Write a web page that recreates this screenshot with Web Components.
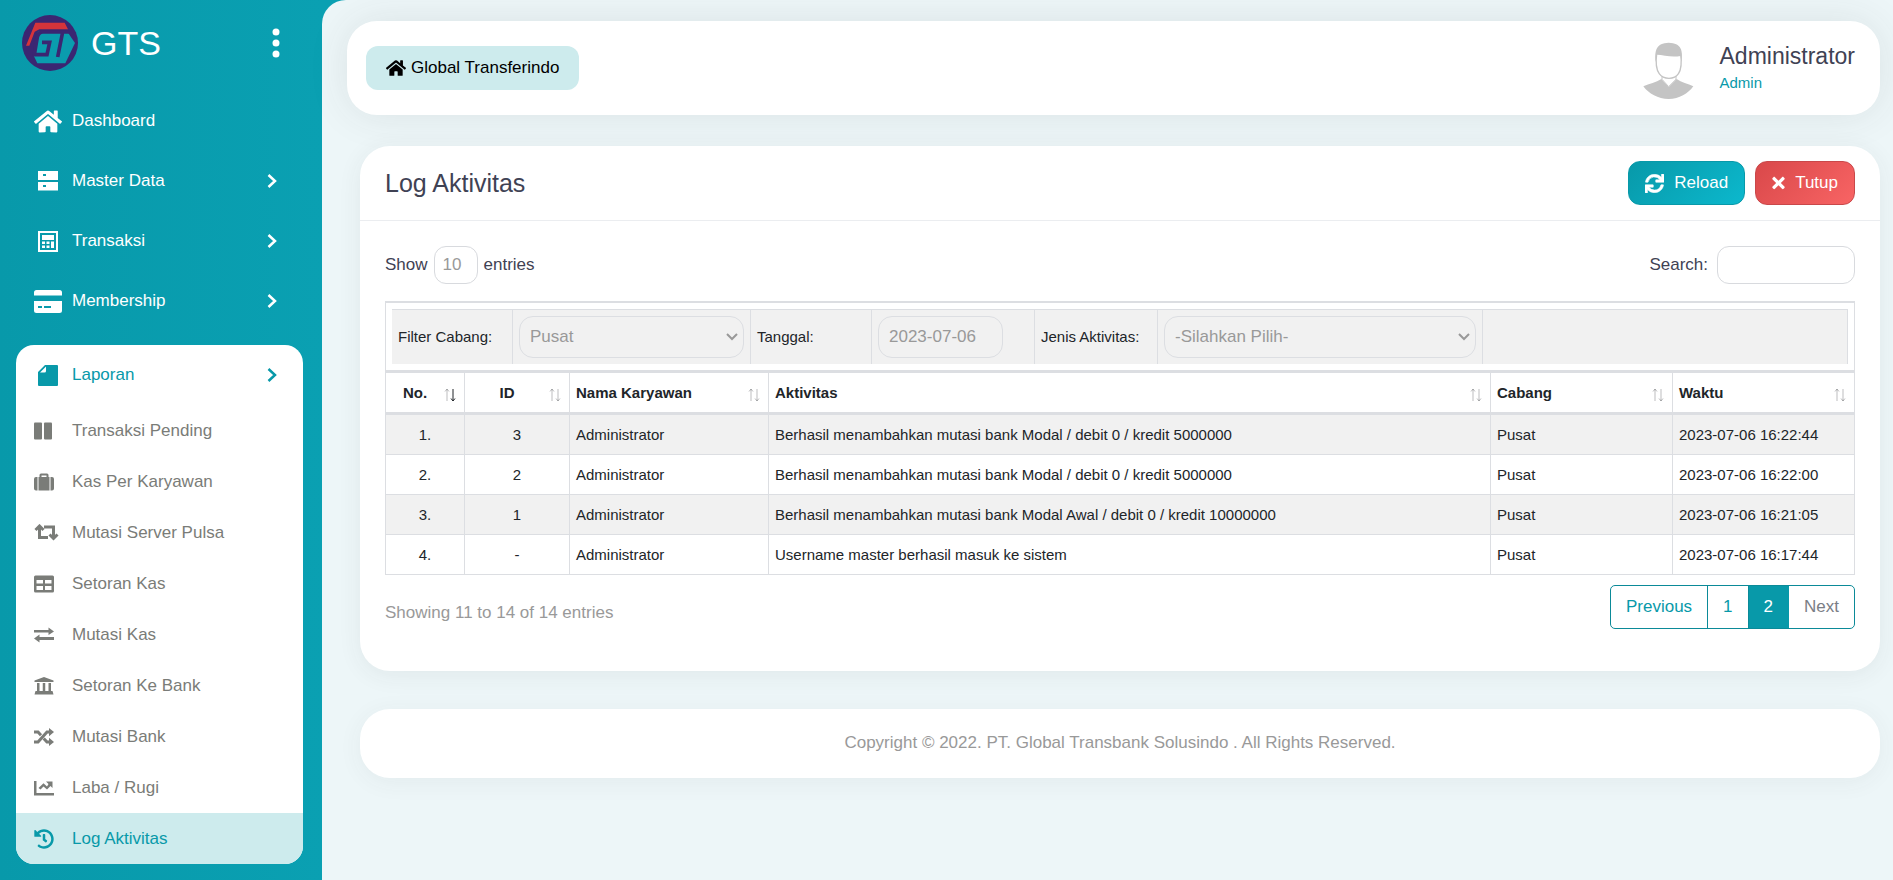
<!DOCTYPE html>
<html lang="id">
<head>
<meta charset="utf-8">
<title>GTS - Log Aktivitas</title>
<style>
  body { margin: 0; font-family: "Liberation Sans", Arial, sans-serif; font-size: 17px; line-height: 24px; color: #3f4254; background: #edf6f8; }
</style>
</head>
<body>
<gts-app>
  <gts-sidebar slot="sidebar"></gts-sidebar>
  <gts-topbar company="Global Transferindo" user="Administrator" role-name="Admin"></gts-topbar>
  <gts-card>
    <span slot="title">Log Aktivitas</span>
    <gts-button slot="actions" icon="sync" tone="primary">Reload</gts-button>
    <gts-button slot="actions" icon="times" tone="danger">Tutup</gts-button>
    <gts-table-tools></gts-table-tools>
    <gts-filter-bar></gts-filter-bar>
    <gts-log-table></gts-log-table>
    <gts-pagination>Showing 11 to 14 of 14 entries</gts-pagination>
  </gts-card>
  <gts-footer>Copyright © 2022. PT. Global Transbank Solusindo . All Rights Reserved.</gts-footer>
</gts-app>

<script>
const HOME = '<path d="M280.37 148.26L96 300.11V464a16 16 0 0 0 16 16l112.06-.29a16 16 0 0 0 15.92-16V368a16 16 0 0 1 16-16h64a16 16 0 0 1 16 16v95.64a16 16 0 0 0 16 16.05L464 480a16 16 0 0 0 16-16V300L295.67 148.26a12.19 12.19 0 0 0-15.3 0zM571.6 251.47L488 182.56V44.05a12 12 0 0 0-12-12h-56a12 12 0 0 0-12 12v72.61L318.47 43a48 48 0 0 0-61 0L4.34 251.47a12 12 0 0 0-1.6 16.9l25.5 31A12 12 0 0 0 45.15 301l235.22-193.74a12.19 12.19 0 0 1 15.3 0L530.9 301a12 12 0 0 0 16.9-1.6l25.5-31a12 12 0 0 0-1.7-16.93z"/>';
/* name: [width, height, viewBox, shapes] */
const ICONS = {
  home: [28, 25, '0 0 576 512', HOME],
  homeSmall: [20, 18, '0 0 576 512', HOME],
  server: [20, 20, '0 0 20 20', '<path fill-rule="evenodd" d="M0 0h20v9H0zM5 3v2h3V3zM0 11h20v8.500H0zM5 14v2h3v-2z"/>'],
  calculator: [20, 21, '0 0 20 21', '<path fill-rule="evenodd" d="M0 0h20v21H0zM2 2v17h16V2z"/><path d="M4 4h12v5H4zM4 10.500h3v2.500H4zM8.500 10.500h3v2.500h-3zM4 14.500h3V17H4zM8.500 14.500h3V17h-3zM13 10.500h3V17h-3z"/>'],
  card: [28, 23, '0 0 28 23', '<path fill-rule="evenodd" d="M2.500 0h23A2.500 2.500 0 0 1 28 2.500V5.500H0V2.500A2.500 2.500 0 0 1 2.500 0zM0 11h28v9.500a2.500 2.500 0 0 1-2.500 2.500h-23A2.500 2.500 0 0 1 0 20.500zM4 16v2h4v-2zM10 16v2h7v-2z"/>'],
  file: [20, 21, '0 0 20 21', '<path fill-rule="evenodd" d="M7 0h12a1 1 0 0 1 1 1v19a1 1 0 0 1-1 1H1a1 1 0 0 1-1-1V7zM8 1.500L2 7.500h4.500A1.500 1.500 0 0 0 8 6z"/>'],
  columns: [18, 18, '0 0 18 18', '<rect width="8" height="17" y="0.500" rx="1"/><rect x="10" y="0.500" width="8" height="17" rx="1"/>'],
  suitcase: [20, 18, '0 0 20 18', '<path d="M2 4h1.500v13.500H2a2 2 0 0 1-2-2V6a2 2 0 0 1 2-2zM16.500 4H18a2 2 0 0 1 2 2v9.500a2 2 0 0 1-2 2h-1.500z"/><path fill-rule="evenodd" d="M4.500 17.500V4h1V2A1.500 1.500 0 0 1 7 .5h6A1.500 1.500 0 0 1 14.500 2v2h1v13.500zM7.500 4h5V2.500h-5z"/>'],
  retweet: [25, 17, '0 0 25 17', '<g fill="none" stroke="currentColor" stroke-width="3"><path d="M5.500 2V13.500H14M19.500 14.500V3H10"/><path d="M1.500 6L5.500 2 9.500 6M15.500 10.500l4 4 4-4"/></g>'],
  table: [20, 18, '0 0 20 18', '<path fill-rule="evenodd" d="M1.500.5h17A1.500 1.500 0 0 1 20 2v14a1.500 1.500 0 0 1-1.500 1.500h-17A1.500 1.500 0 0 1 0 16V2A1.500 1.500 0 0 1 1.500.5zM2.500 5v3.500H9V5zM11 5v3.500h6.500V5zM2.500 11v4H9v-4zM11 11v4h6.500v-4z"/>'],
  exchange: [20, 16, '0 0 20 16', '<path d="M0 3h14.500V.5L20 4.500 14.500 8V5.500H0zM20 10H5.500V7.500L0 11.500l5.500 4V13H20z"/>'],
  bank: [20, 18, '0 0 20 18', '<path d="M10 0l9.500 3.500V5H.5V3.500zM3 6h2.500v8.500H3zM8.750 6h2.500v8.500h-2.500zM14.500 6H17v8.500h-2.500zM1.500 14h17l1 3.500H.5z"/>'],
  random: [20, 18, '0 0 20 18', '<path d="M15 0l5 4-5 4.200zM15 9.800l5 4.200-5 4z"/><path fill="none" stroke="currentColor" stroke-width="3" d="M0 4h4l3 3.200M9.700 10.500L13 14h3M0 14h4L13 4h3"/>'],
  chart: [20, 16, '0 0 20 16', '<path d="M0 1h2.500v12H20v2.500H0zM12 1.500h6.500V8l-2-2-3.500 3.500-3.500-3-3 3L4.500 8l5-4.800L13 6.500l1.500-2.500z"/>'],
  history: [20, 20, '0 0 512 512', '<path d="M504 255.531c.253 136.64-111.18 248.372-247.82 248.468-59.015.042-113.223-20.53-155.822-54.911-11.077-8.94-11.905-25.541-1.839-35.607l11.267-11.267c8.609-8.609 22.353-9.551 31.891-1.984C173.062 425.135 212.781 440 256 440c101.705 0 184-82.311 184-184 0-101.705-82.311-184-184-184-48.814 0-93.149 18.969-126.068 49.932l50.754 50.754c10.08 10.08 2.941 27.314-11.313 27.314H24c-8.837 0-16-7.163-16-16V38.627c0-14.254 17.234-21.393 27.314-11.314l49.372 49.372C129.209 34.136 189.552 8 256 8c136.81 0 247.747 110.78 248 247.531zm-180.912 78.784l9.823-12.63c8.138-10.463 6.253-25.542-4.21-33.679L288 256.349V152c0-13.255-10.745-24-24-24h-16c-13.255 0-24 10.745-24 24v135.651l65.409 50.874c10.463 8.137 25.541 6.253 33.679-4.21z"/>'],
  sync: [19, 19, '0 0 512 512', '<path stroke="currentColor" stroke-width="14" d="M440.65 12.570l4 82.770A247.160 247.160 0 0 0 255.830 8C134.730 8 33.910 94.920 12.290 209.820A12 12 0 0 0 24.090 224h49.050a12 12 0 0 0 11.670-9.260 175.910 175.910 0 0 1 317-56.940l-101.460-4.860a12 12 0 0 0-12.570 12v47.410a12 12 0 0 0 12 12H500a12 12 0 0 0 12-12V12a12 12 0 0 0-12-12h-47.370a12 12 0 0 0-11.980 12.570zM255.830 432a175.610 175.610 0 0 1-146-77.800l101.800 4.870a12 12 0 0 0 12.570-12v-47.400a12 12 0 0 0-12-12H12a12 12 0 0 0-12 12V500a12 12 0 0 0 12 12h47.350a12 12 0 0 0 12-12.600l-4.150-82.570A247.170 247.170 0 0 0 255.830 504c121.110 0 221.930-86.920 243.550-201.820a12 12 0 0 0-11.800-14.180h-49.050a12 12 0 0 0-11.670 9.260A175.860 175.860 0 0 1 255.830 432z"/>'],
  times: [13, 18, '0 0 352 512', '<path d="M242.720 256l100.070-100.070c12.280-12.280 12.280-32.190 0-44.480l-22.240-22.240c-12.280-12.280-32.190-12.280-44.480 0L176 189.280 75.930 89.210c-12.280-12.280-32.190-12.280-44.480 0L9.210 111.450c-12.280 12.280-12.280 32.190 0 44.480L109.280 256 9.210 356.070c-12.280 12.280-12.280 32.190 0 44.480l22.240 22.240c12.280 12.280 32.200 12.280 44.480 0L176 322.720l100.070 100.070c12.280 12.280 32.200 12.280 44.480 0l22.240-22.240c12.280-12.280 12.280-32.190 0-44.480L242.720 256z"/>'],
  chevron: [10, 14, '0 0 10 14', '<path fill="none" stroke="currentColor" stroke-width="2.500" d="M1.500 1L8 7l-6.500 6"/>'],
  down: [12, 8, '0 0 12 8', '<path fill="none" stroke="currentColor" stroke-width="2" d="M1 1l5 5 5-5"/>'],
  dots: [8, 30, '0 0 8 30', '<circle cx="4" cy="4" r="3.500"/><circle cx="4" cy="15" r="3.500"/><circle cx="4" cy="26" r="3.500"/>'],
  sort: [12, 14, '0 0 12 14', '<g fill="none" stroke="currentColor"><path d="M3 13V1M1 3.500L3 1l2 2.500" opacity=".3"/><path class="dn" d="M9 1v12M7 10.500L9 13l2-2.500" opacity=".3"/></g>'],
  avatar: [52, 58, '42 36 156 174', '<path d="M46 169c18-8 38-12 54-22l22 24 24-24c14 10 34 14 50 22-16 22-42 38-74 38s-60-16-76-38z"/><path d="M102 138h42v10l-22 22-20-22z" fill="#fff" stroke="currentColor" stroke-width="3"/><path d="M86 72c-8 60 16 73 37 73s43-13 35-73z" fill="#fff" stroke="currentColor" stroke-width="4"/><path d="M83 96c-4-34 2-57 39-58 38 1 44 24 38 58l-2-18c-24 4-50 0-72-6z"/>'],
  logo: [56, 56, '0 0 168 168', '<circle cx="84" cy="84" r="84" fill="#3b2672"/><path d="M48 50h88l23 34-29 61H46L36 124z" fill="#0a9cae"/><path d="M12 92L40 23h88l10 20H52L38 50 22 92z" fill="#d5343b"/><path d="M143 51H62Q50 52 46 66L37 119H75L83 82H60M122 51L107 126" fill="none" stroke="#3b2672" stroke-width="11"/>']
};
const icon = n => { const [w, h, v, p] = ICONS[n]; return `<svg width="${w}" height="${h}" viewBox="${v}" fill="currentColor" aria-hidden="true">${p}</svg>`; };
const BASE = '*{box-sizing:border-box}svg{display:block;flex:none}a{color:inherit;text-decoration:none}button,input,select{font:inherit;margin:0}';

class GtsElement extends HTMLElement {
  connectedCallback() {
    if (this.shadowRoot) return;
    this.attachShadow({ mode: 'open' }).innerHTML = `<style>${BASE}${this.css()}</style>${this.html()}`;
  }
}
const define = (name, css, html) => customElements.define(name, class extends GtsElement {
  css() { return css; }
  html() { return html(this); }
});

define('gts-app', `
  :host{display:flex;min-height:100vh;background:linear-gradient(90deg,#0899aa,#0aa0b2 322px)}
  .side{flex:0 0 322px}
  main{flex:1;min-width:0;padding:21px 13px 21px 25px;background:#edf6f8;border-top-left-radius:24px}
`, () => `<div class="side"><slot name="sidebar"></slot></div><main><slot></slot></main>`);

define('gts-nav-item', `
  :host{display:block}
  a{display:flex;align-items:center;height:60px;padding:0 26px 0 34px}
  .ic{width:28px;margin-right:10px;display:flex;justify-content:center}
  .tx{flex:1}
  :host([inset]) a{padding:0 26px 0 18px}
  :host([sub]) a{height:51px;padding:0 18px;color:#7a7c78}
  :host([sub]) .ic{justify-content:flex-start}
  :host([sub][current]) a{background:#cdebed;color:#0899a9}
`, el => `<a href="#"${el.hasAttribute('current') ? ' aria-current="page"' : ''}><span class="ic">${icon(el.getAttribute('icon'))}</span><span class="tx"><slot></slot></span>${el.hasAttribute('arrow') ? icon('chevron') : ''}</a>`);

define('gts-sidebar', `
  :host{display:block;color:#fff}
  header{display:flex;align-items:center;padding:15px 42px 20px 22px}
  h1{margin:0 0 0 13px;flex:1;font-size:34px;line-height:56px;font-weight:400}
  button{border:0;background:none;padding:0;color:inherit}
  nav>gts-nav-item[arrow]{padding-right:19px}
  section{margin:14px 19px 0 16px;background:#fff;border-radius:18px;overflow:hidden;color:#0899a9}
`, () => `<header>${icon('logo')}<h1>GTS</h1><button type="button" aria-label="Menu">${icon('dots')}</button></header>
  <nav>
    <gts-nav-item icon="home">Dashboard</gts-nav-item>
    <gts-nav-item icon="server" arrow>Master Data</gts-nav-item>
    <gts-nav-item icon="calculator" arrow>Transaksi</gts-nav-item>
    <gts-nav-item icon="card" arrow>Membership</gts-nav-item>
    <section>
      <gts-nav-item icon="file" arrow inset>Laporan</gts-nav-item>
      <gts-nav-item sub icon="columns">Transaksi Pending</gts-nav-item>
      <gts-nav-item sub icon="suitcase">Kas Per Karyawan</gts-nav-item>
      <gts-nav-item sub icon="retweet">Mutasi Server Pulsa</gts-nav-item>
      <gts-nav-item sub icon="table">Setoran Kas</gts-nav-item>
      <gts-nav-item sub icon="exchange">Mutasi Kas</gts-nav-item>
      <gts-nav-item sub icon="bank">Setoran Ke Bank</gts-nav-item>
      <gts-nav-item sub icon="random">Mutasi Bank</gts-nav-item>
      <gts-nav-item sub icon="chart">Laba / Rugi</gts-nav-item>
      <gts-nav-item sub icon="history" current>Log Aktivitas</gts-nav-item>
    </section>
  </nav>`);

define('gts-topbar', `
  :host{display:flex;align-items:center;justify-content:space-between;padding:20px 25px 15px 19px;background:#fff;border-radius:30px;box-shadow:0 0 40px rgba(60,60,60,.1)}
  .company{display:flex;align-items:center;gap:5px;height:44px;margin-bottom:6px;padding:0 20px;border-radius:12px;background:#cdebed;color:#000}
  .user{display:flex;align-items:flex-start;gap:26px}
  .user>svg{color:#c4c4c4;margin-top:1px}
  .name{display:block;font-size:23px;line-height:30px}
  .role{display:block;font-size:15px;line-height:24px;color:#0899a9}
`, el => `<a class="company" href="#">${icon('homeSmall')}<span>${el.getAttribute('company')}</span></a>
  <div class="user">${icon('avatar')}<div><span class="name">${el.getAttribute('user')}</span><span class="role">${el.getAttribute('role-name')}</span></div></div>`);

define('gts-button', `
  :host{display:block}
  button{display:flex;align-items:center;gap:10px;height:44px;padding:0 16px;border-radius:12px;color:#fff}
  .primary{background:linear-gradient(135deg,#0899a9,#0cb8cd);border:1px solid #0899a9}
  .danger{background:linear-gradient(135deg,#d9484a,#f86464);border:1px solid #c9484a}
`, el => `<button type="button" class="${el.getAttribute('tone')}">${icon(el.getAttribute('icon'))}<slot></slot></button>`);

define('gts-card', `
  :host{display:block;margin:31px 0 0 13px;background:#fff;border-radius:30px;box-shadow:0 4px 24px rgba(60,60,60,.07)}
  header{display:flex;align-items:center;justify-content:space-between;height:75px;padding:0 25px;border-bottom:1px solid #ebedf0}
  h2{margin:0;font-size:25px;line-height:32px;font-weight:400}
  .actions{display:flex;gap:10px}
  .body{padding:25px 25px 42px}
`, () => `<header><h2><slot name="title"></slot></h2><div class="actions"><slot name="actions"></slot></div></header><div class="body"><slot></slot></div>`);

define('gts-table-tools', `
  :host{display:flex;justify-content:space-between;margin-bottom:17px}
  div{display:flex;align-items:center}
  .show{gap:6px}
  .search{gap:9px}
  select,input{height:38px;border:1px solid #d8dade;border-radius:12px;background:#fff;color:#999;outline:0}
  select{appearance:none;width:44px;padding:0 8px}
  input{width:138px;padding:0 8px}
`, () => `<div class="show"><label for="len">Show</label><select id="len"><option>10</option></select><label for="len">entries</label></div>
  <div class="search"><label for="q">Search:</label><input id="q" type="search"></div>`);

define('gts-filter-bar', `
  :host{display:block;border:1px solid #dcdee2;border-top-width:2px;border-bottom:0;padding:6px}
  form{display:grid;grid-template-columns:121px 238px 121px 163px 123px 325px 1fr;height:55px;background:#f1f1f1;border-top:1px solid #dcdee2;color:#212529;font-size:15px}
  form>*{display:flex;align-items:center;padding:0 6px;border-right:1px solid #dcdee2}
  input,select{appearance:none;height:42px;width:100%;padding:0 10px;border:1px solid #dcdee2;border-radius:14px;background:transparent;color:#999;font-size:17px}
  input{width:125px}
  .pick{display:grid;align-items:center}
  .pick>*{grid-area:1/1}
  .pick svg{justify-self:end;margin-right:6px;color:#999;pointer-events:none}
`, () => `<form><label for="cabang">Filter Cabang:</label><span class="pick"><select id="cabang"><option>Pusat</option></select>${icon('down')}</span>
  <label for="tgl">Tanggal:</label><span><input id="tgl" type="text" value="2023-07-06"></span>
  <label for="jenis">Jenis Aktivitas:</label><span class="pick"><select id="jenis"><option>-Silahkan Pilih-</option></select>${icon('down')}</span><span></span></form>`);

const ROWS = [
  ['1.', '3', 'Berhasil menambahkan mutasi bank Modal / debit 0 / kredit 5000000', '2023-07-06 16:22:44'],
  ['2.', '2', 'Berhasil menambahkan mutasi bank Modal / debit 0 / kredit 5000000', '2023-07-06 16:22:00'],
  ['3.', '1', 'Berhasil menambahkan mutasi bank Modal Awal / debit 0 / kredit 10000000', '2023-07-06 16:21:05'],
  ['4.', '-', 'Username master berhasil masuk ke sistem', '2023-07-06 16:17:44']
];
define('gts-log-table', `
  :host{display:block;color:#212529;font-size:15px;line-height:20px}
  table{width:100%;table-layout:fixed;border-collapse:separate;border-spacing:0;border:solid #dcdee2;border-width:3px 0 0 1px}
  th{height:42px;padding:0;border:solid #dcdee2;border-width:0 1px 3px 0;text-align:left}
  th button{display:flex;align-items:center;gap:6px;width:100%;padding:0 8px 0 6px;border:0;background:none;color:inherit;text-align:inherit}
  th span{flex:1}
  th svg{margin-top:4px}
  th[aria-sort] .dn{opacity:1}
  td{height:40px;padding:0 6px;border:solid #dcdee2;border-width:0 1px 1px 0}
  tbody tr:nth-child(odd){background:#f1f1f1}
  .c{text-align:center}
`, () => `<table><colgroup><col style="width:79px"><col style="width:105px"><col style="width:199px"><col><col style="width:182px"><col style="width:182px"></colgroup>
  <thead><tr>${['No.', 'ID', 'Nama Karyawan', 'Aktivitas', 'Cabang', 'Waktu'].map((t, i) => `<th scope="col"${i < 2 ? ' class="c"' : ''}${i ? '' : ' aria-sort="descending"'}><button type="button"><span>${t}</span>${icon('sort')}</button></th>`).join('')}</tr></thead>
  <tbody>${ROWS.map(r => `<tr><td class="c">${r[0]}</td><td class="c">${r[1]}</td><td>Administrator</td><td>${r[2]}</td><td>Pusat</td><td>${r[3]}</td></tr>`).join('')}</tbody></table>`);

define('gts-pagination', `
  :host{display:flex;justify-content:space-between;align-items:flex-start;margin-top:10px;color:#999}
  p{margin:16px 0 0}
  nav{display:flex;height:44px;border:1px solid #0b8a98;border-radius:5px;overflow:hidden;color:#0899a9}
  a{display:flex;align-items:center;padding:0 15px;border-right:1px solid #0b8a98}
  a[aria-current]{background:#0899a9;color:#fff;border-color:#0899a9}
  a:last-child{border:0;color:#7a7e86}
`, () => `<p><slot></slot></p><nav aria-label="Pagination"><a href="#">Previous</a><a href="#">1</a><a href="#" aria-current="page">2</a><a href="#" aria-disabled="true">Next</a></nav>`);

define('gts-footer', `
  :host{display:block;margin:38px 0 0 13px;padding:22px 25px 23px;background:#fff;border-radius:30px;box-shadow:0 4px 24px rgba(60,60,60,.06);color:#999;text-align:center}
`, () => `<slot></slot>`);
</script>
</body>
</html>
